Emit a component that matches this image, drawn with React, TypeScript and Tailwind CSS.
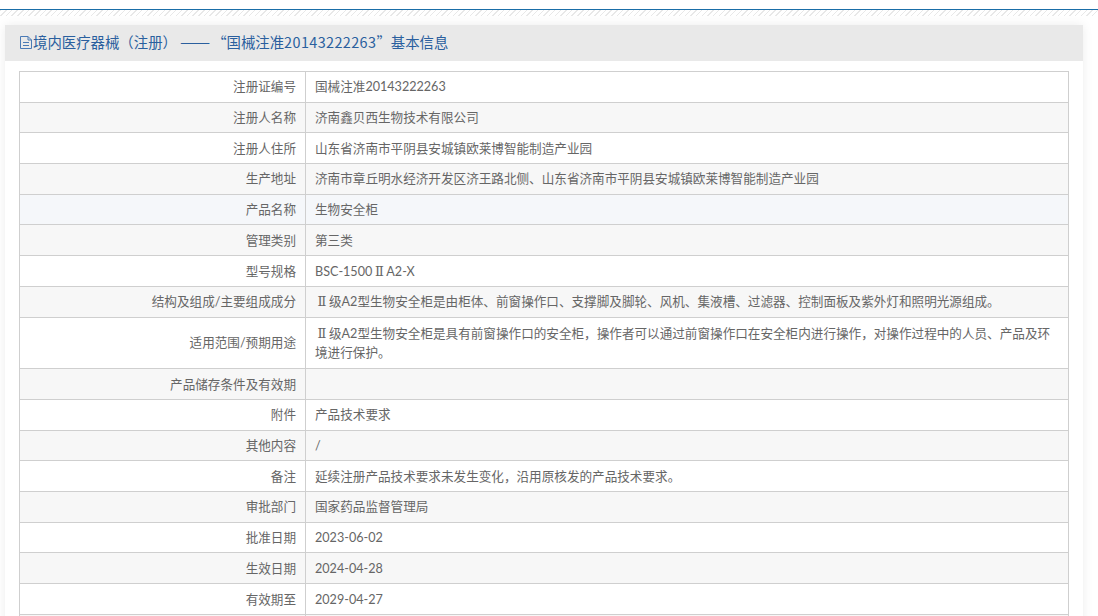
const rows: [string, string][] = [
  ["注册证编号", "国械注准20143222263"],
  ["注册人名称", "济南鑫贝西生物技术有限公司"],
  ["注册人住所", "山东省济南市平阴县安城镇欧莱博智能制造产业园"],
  ["生产地址", "济南市章丘明水经济开发区济王路北侧、山东省济南市平阴县安城镇欧莱博智能制造产业园"],
  ["产品名称", "生物安全柜"],
  ["管理类别", "第三类"],
  ["型号规格", "BSC-1500ⅡA2-X"],
  ["结构及组成/主要组成成分", "Ⅱ级A2型生物安全柜是由柜体、前窗操作口、支撑脚及脚轮、风机、集液槽、过滤器、控制面板及紫外灯和照明光源组成。"],
  ["适用范围/预期用途", "Ⅱ级A2型生物安全柜是具有前窗操作口的安全柜，操作者可以通过前窗操作口在安全柜内进行操作，对操作过程中的人员、产品及环境进行保护。"],
  ["产品储存条件及有效期", ""],
  ["附件", "产品技术要求"],
  ["其他内容", "/"],
  ["备注", "延续注册产品技术要求未发生变化，沿用原核发的产品技术要求。"],
  ["审批部门", "国家药品监督管理局"],
  ["批准日期", "2023-06-02"],
  ["生效日期", "2024-04-28"],
  ["有效期至", "2029-04-27"],
  ["", ""],
];

function rowBg(i: number) {
  if (i === 4) return "bg-[#f5f7fa]";
  return i % 2 === 1 ? "bg-[#f7f7f7]" : "bg-white";
}

// the roman numeral is a wide serif glyph in the original
function Value({ text }: { text: string }) {
  if (!text) return <>{"\u00a0"}</>;
  const parts = text.split("Ⅱ");
  return (
    <>
      {parts.map((part, i) => (
        <span key={i}>
          {i > 0 && (
            <span className="inline-block w-[14px] text-center font-['DejaVu_Serif',serif] text-[13px] leading-none">Ⅱ</span>
          )}
          {part}
        </span>
      ))}
    </>
  );
}

export default function App() {
  return (
    <div className="h-[616px] overflow-hidden bg-white font-['Lato','Noto_Sans_CJK_SC',sans-serif] text-[12.6px] leading-[18.9px] text-[#666]">
      {/* top rule + hatch */}
      <div className="mt-[9px] h-[7px] border-t border-[#1a6ea8] bg-[repeating-linear-gradient(135deg,#e8e8e8_0px,#e8e8e8_1px,#ffffff_1px,#ffffff_4px)]" />

      <div className="mx-[5px] mt-[9px] w-[1078px] bg-white shadow-[0_0_10px_rgba(0,0,0,0.08)]">
        <div className="flex h-[36px] items-center bg-[#e9e9e9] pb-[1px] pl-[14px] font-['Noto_Sans_CJK_SC',sans-serif] text-[14.4px] text-[#2a5f9e]">
          <svg width="14" height="15" viewBox="0 0 14 15" fill="none" stroke="#4a7ab5" strokeWidth="1">
            <path d="M1.5 1.5h7.5l3.500 3.500v8.500h-11z" />
            <path d="M9 1.500v3.500h3.500M4 7.500h6M4 10.500h6" />
          </svg>
          <span className="whitespace-pre">
            境内医疗器械（注册） <span className="inline-block w-[32px] origin-left scale-x-[1.25] leading-none">——</span>“国械注准<span className="tracking-[0.4px]">20143222263</span>”基本信息
          </span>
        </div>

        <div className="px-[14px] pt-[10px]">
          <table className="w-[1050px] table-fixed border-collapse">
            <colgroup>
              <col className="w-[286px]" />
              <col />
            </colgroup>
            <tbody>
              {rows.map(([label, value], i) => (
                <tr key={i} className={rowBg(i)}>
                  <td className={`border border-[#cfcfcf] px-[9px] text-right ${i === 8 ? "pt-[7.5px] pb-[5.5px]" : "pt-[6.400px] pb-[4.400px]"}`}>{label}</td>
                  <td className={`border border-[#cfcfcf] px-[9px] ${i === 8 ? "pt-[7.5px] pb-[5.5px]" : "pt-[6.400px] pb-[4.400px]"}`}>
                    <Value text={value} />
                  </td>
                </tr>
              ))}
            </tbody>
          </table>
        </div>
      </div>
    </div>
  );
}
